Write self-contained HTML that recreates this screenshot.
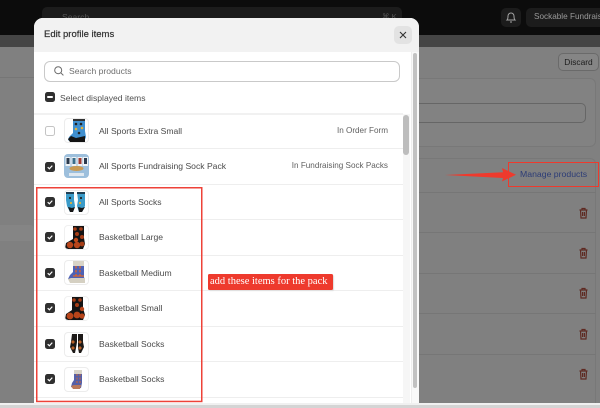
<!DOCTYPE html>
<html><head><meta charset="utf-8">
<style>
html,body{margin:0;padding:0;width:600px;height:408px;overflow:hidden;background:#808080;font-family:"Liberation Sans",sans-serif}
*{box-sizing:border-box}
#w{position:absolute;left:0;top:0;width:600px;height:408px;overflow:hidden;background:#808080;filter:blur(.3px)}
.a{position:absolute}
.row{position:absolute;left:34px;width:369px;height:1px;background:#eeeeee}
.cb{position:absolute;left:45px;width:10px;height:10px;border-radius:2.5px;background:#303030}
.cb svg{position:absolute;left:0;top:0}
.th{position:absolute;left:64px;width:25px;height:25px;border:1px solid #ececec;border-radius:4px;background:#fff;overflow:hidden}
.th svg{position:absolute;left:0;top:0}
.t{position:absolute;left:99px;font-size:8.6px;line-height:12px;color:#4a4a4a;white-space:nowrap}
.r{position:absolute;right:212px;font-size:8.15px;line-height:12px;color:#616161;white-space:nowrap}
.tr{position:absolute;left:578px}
</style></head>
<body>
<div id="w">
<div class="a" style="left:0;top:0;width:600px;height:35px;background:#0c0c0c"></div>
<div class="a" style="left:0;top:35px;width:600px;height:12px;background:#454545"></div>
<div class="a" style="left:42px;top:7px;width:360px;height:20px;border-radius:5px;background:#1c1c1c"></div>
<div class="a" style="left:62px;top:11px;font-size:8.6px;line-height:12px;color:#555">Search</div>
<div class="a" style="left:382px;top:11px;font-size:7.5px;line-height:12px;color:#555">⌘ K</div>
<div class="a" style="left:501px;top:8px;width:20px;height:19px;border-radius:5px;background:#1c1c1c"></div>
<svg class="a" style="left:505px;top:11px" width="12" height="13" viewBox="0 0 12 13" fill="none" stroke="#a6a6a6" stroke-width="1"><path d="M2 9c1-1 1-2 1-4a3 3 0 0 1 6 0c0 2 0 3 1 4z"/><path d="M5 11h2"/></svg>
<div class="a" style="left:526px;top:8px;width:74px;height:19px;border-radius:5px 0 0 5px;background:#1c1c1c"></div>
<div class="a" style="left:534px;top:11px;font-size:8.2px;line-height:12px;color:#9a9a9a;white-space:nowrap">Sockable Fundraisi</div>

<div class="a" style="left:0;top:77px;width:34px;height:1px;background:#767676"></div>
<div class="a" style="left:0;top:225px;width:34px;height:16px;background:#858585;border-radius:0 4px 4px 0"></div>

<div class="a" style="left:558px;top:53px;width:41px;height:18px;border:1px solid #6a6a6a;border-radius:5px;background:#858585;font-size:8.4px;line-height:16px;text-align:center;color:#1c1c1c">Discard</div>
<div class="a" style="left:419px;top:78px;width:177px;height:69px;border-radius:0 6px 6px 0;background:#828282;border:1px solid #787878;border-left:0"></div>
<div class="a" style="left:419px;top:103px;width:167px;height:20px;border:1px solid #666;border-left:0;border-radius:0 5px 5px 0"></div>
<div class="a" style="left:419px;top:158px;width:177px;height:250px;background:#808080;border-right:1px solid #787878;border-top:1px solid #787878;border-radius:0 6px 0 0"></div>
<div class="a" style="left:419px;top:192px;width:177px;height:1px;background:#767676"></div>
<div class="a" style="left:419px;top:232px;width:177px;height:1px;background:#767676"></div>
<div class="a" style="left:419px;top:273px;width:177px;height:1px;background:#767676"></div>
<div class="a" style="left:419px;top:313px;width:177px;height:1px;background:#767676"></div>
<div class="a" style="left:419px;top:354px;width:177px;height:1px;background:#767676"></div>

<div class="a" style="left:520px;top:168px;font-size:8.7px;line-height:12px;color:#2c3c76;white-space:nowrap">Manage products</div>
<div class="a" style="left:508px;top:162px;width:91px;height:25px;border:1.5px solid #ee3a2d"></div>
<svg class="a" style="left:444px;top:165px" width="75" height="20" viewBox="0 0 75 20"><path d="M1 10 L59 7.2 L58 3 L72 9.8 L58 16.5 L59 13 Z" fill="#ee3a2d"/></svg>

<svg class="tr" style="top:207px" width="11" height="12" viewBox="0 0 11 12" fill="none" stroke="#5e2a22" stroke-width="1.2"><path d="M1.5 3h8M4 3V1.5h3V3M2.5 3l.5 8h5l.5-8M4.6 5v4M6.4 5v4"/></svg>
<svg class="tr" style="top:247px" width="11" height="12" viewBox="0 0 11 12" fill="none" stroke="#5e2a22" stroke-width="1.2"><path d="M1.5 3h8M4 3V1.5h3V3M2.5 3l.5 8h5l.5-8M4.6 5v4M6.4 5v4"/></svg>
<svg class="tr" style="top:287px" width="11" height="12" viewBox="0 0 11 12" fill="none" stroke="#5e2a22" stroke-width="1.2"><path d="M1.5 3h8M4 3V1.5h3V3M2.5 3l.5 8h5l.5-8M4.6 5v4M6.4 5v4"/></svg>
<svg class="tr" style="top:328px" width="11" height="12" viewBox="0 0 11 12" fill="none" stroke="#5e2a22" stroke-width="1.2"><path d="M1.5 3h8M4 3V1.5h3V3M2.5 3l.5 8h5l.5-8M4.6 5v4M6.4 5v4"/></svg>
<svg class="tr" style="top:368px" width="11" height="12" viewBox="0 0 11 12" fill="none" stroke="#5e2a22" stroke-width="1.2"><path d="M1.5 3h8M4 3V1.5h3V3M2.5 3l.5 8h5l.5-8M4.6 5v4M6.4 5v4"/></svg>

<!-- modal -->
<div class="a" style="left:34px;top:18px;width:385px;height:390px;background:#fff;border-radius:9px 9px 0 0;overflow:hidden">
  <div class="a" style="left:0;top:0;width:385px;height:34px;background:#f2f2f2"></div>
  <div class="a" style="left:377px;top:34px;width:8px;height:356px;background:#f9f9f9;border-left:1px solid #eee"></div>
  <div class="a" style="left:379px;top:35px;width:4px;height:335px;border-radius:2px;background:#c2c2c2"></div>
  <div class="a" style="left:369px;top:96px;width:7px;height:296px;background:#f6f6f6"></div>
  <div class="a" style="left:369px;top:97px;width:6px;height:40px;border-radius:3px;background:#bdbdbd"></div>
</div>
<div class="a" style="left:44px;top:28px;font-size:9.5px;line-height:13px;font-weight:normal;color:#303030;-webkit-text-stroke:.2px #303030">Edit profile items</div>
<div class="a" style="left:394px;top:26px;width:18px;height:18px;border-radius:5px;background:#e3e3e3"></div>
<svg class="a" style="left:399px;top:31px" width="8" height="8" viewBox="0 0 8 8" stroke="#333" stroke-width="1.1"><path d="M1 1l6 6M7 1l-6 6"/></svg>

<div class="a" style="left:44px;top:61px;width:356px;height:21px;border:1px solid #c9c9c9;border-radius:6px;background:#fff"></div>
<svg class="a" style="left:53px;top:65px" width="12" height="12" viewBox="0 0 12 12" fill="none" stroke="#6b6b6b" stroke-width="1"><circle cx="5.2" cy="5.2" r="3.5"/><path d="M7.8 7.8l2.6 2.6"/></svg>
<div class="a" style="left:69px;top:65px;font-size:8.6px;line-height:12px;color:#6f6f6f">Search products</div>

<div class="cb" style="top:92px"><div class="a" style="left:2px;top:4px;width:6px;height:2px;background:#fff;border-radius:1px"></div></div>
<div class="a" style="left:60px;top:91.5px;font-size:8.6px;line-height:12px;color:#4f4f4f">Select displayed items</div>

<div class="row" style="top:113px;background:#f1f1f1;height:2px"></div>
<div class="row" style="top:148px"></div>
<div class="row" style="top:184px"></div>
<div class="row" style="top:219px"></div>
<div class="row" style="top:255px"></div>
<div class="row" style="top:290px"></div>
<div class="row" style="top:326px"></div>
<div class="row" style="top:361px"></div>
<div class="row" style="top:397px"></div>

<!-- row 1 -->
<div class="a" style="left:45px;top:126px;width:10px;height:10px;border:1px solid #c4c4c4;border-radius:2.5px;background:#fff"></div>
<div class="th" style="top:118px"><svg width="23" height="23" viewBox="0 0 23 23"><path d="M8 0h12v12l1 6-2 5H6l-3-2 1-3 4-4z" fill="#3f8fcf"/><path d="M3 20l3-3 5 2 9-2v6H5z" fill="#141414"/><path d="M8 0h12v2H8z" fill="#333"/><circle cx="11" cy="5" r="1.3" fill="#222"/><circle cx="16" cy="5" r="1.3" fill="#222"/><circle cx="17" cy="9" r="1.3" fill="#e2b33c"/><circle cx="11" cy="10" r="1.3" fill="#e2b33c"/><circle cx="14" cy="14" r="1.3" fill="#222"/></svg></div>
<div class="t" style="top:125px">All Sports Extra Small</div>
<div class="r" style="top:125px">In Order Form</div>

<!-- row 2 -->
<div class="cb" style="top:162px"><svg width="10" height="10"><path d="M2.7 5.2l1.7 1.6 2.9-3.2" fill="none" stroke="#fff" stroke-width="1.2"/></svg></div>
<div class="th" style="top:154px;height:24px;border:0;background:#9dbfdc"><svg width="25" height="24" viewBox="0 0 25 24"><rect x="1.5" y="3" width="5" height="9" fill="#eef2f5"/><rect x="2.5" y="4" width="3" height="6" fill="#2b3a4d"/><rect x="7.5" y="3" width="5" height="9" fill="#eef2f5"/><rect x="8.5" y="4" width="3" height="6" fill="#3a6d8a"/><rect x="13.5" y="3" width="5" height="9" fill="#eef2f5"/><rect x="14.5" y="4" width="3" height="6" fill="#a33c32"/><rect x="19" y="3" width="5" height="9" fill="#eef2f5"/><rect x="20" y="4" width="3" height="6" fill="#2b3a4d"/><ellipse cx="12.5" cy="14.5" rx="7" ry="2.5" fill="#c99a52"/><rect x="5" y="19" width="15" height="3" fill="#dfe8f0"/></svg></div>
<div class="t" style="top:160px">All Sports Fundraising Sock Pack</div>
<div class="r" style="top:160px">In Fundraising Sock Packs</div>

<!-- row 3 -->
<div class="cb" style="top:197px"><svg width="10" height="10"><path d="M2.7 5.2l1.7 1.6 2.9-3.2" fill="none" stroke="#fff" stroke-width="1.2"/></svg></div>
<div class="th" style="top:190px"><svg width="23" height="23" viewBox="0 0 23 23"><path d="M1 1h8v8l1 6-2 6H5L2 15l-1-6z" fill="#3b9bc9"/><path d="M12 1h8v8l0 6-3 6h-3l-2-6 1-6z" fill="#3b9bc9"/><path d="M3 16l2 5h3l2-5-3 1zM13 16l1 5h3l3-5-3 1z" fill="#161616"/><path d="M1 1h8v2H1zM12 1h8v2h-8z" fill="#1f3e52"/><circle cx="5" cy="7" r="1.1" fill="#222"/><circle cx="16" cy="7" r="1.1" fill="#222"/><circle cx="6" cy="12" r="1.1" fill="#e2b33c"/><circle cx="15" cy="12" r="1.1" fill="#e2b33c"/></svg></div>
<div class="t" style="top:195.5px">All Sports Socks</div>

<!-- row 4 -->
<div class="cb" style="top:232px"><svg width="10" height="10"><path d="M2.7 5.2l1.7 1.6 2.9-3.2" fill="none" stroke="#fff" stroke-width="1.2"/></svg></div>
<div class="th" style="top:225px;border-color:#f0f0f0"><svg width="23" height="23" viewBox="0 0 23 23"><path d="M8 0h11v12l1 6-2 5H3L0 22l1-5 7-4z" fill="#141414"/><circle cx="10" cy="3" r="1.8" fill="#a63d16"/><circle cx="16" cy="3" r="1.8" fill="#a63d16"/><circle cx="12" cy="8" r="2" fill="#a63d16"/><circle cx="17" cy="11" r="2" fill="#a63d16"/><circle cx="11" cy="14" r="2.2" fill="#c24a1a"/><circle cx="5" cy="19" r="3.2" fill="#b8451a"/><circle cx="12" cy="19" r="3.2" fill="#b8451a"/><circle cx="17" cy="18" r="2.4" fill="#a63d16"/></svg></div>
<div class="t" style="top:231px">Basketball Large</div>

<!-- row 5 -->
<div class="cb" style="top:268px"><svg width="10" height="10"><path d="M2.7 5.2l1.7 1.6 2.9-3.2" fill="none" stroke="#fff" stroke-width="1.2"/></svg></div>
<div class="th" style="top:260px"><svg width="23" height="23" viewBox="0 0 23 23"><path d="M8 0h11v5H8z" fill="#d8d4c8"/><path d="M8 5h11v11l1 4H6L3 18l2-4 3-3z" fill="#4e62b5"/><path d="M3 18l3-1 14 0 0 5H5z" fill="#d5d0c2"/><path d="M11 5v11M15 5v12" stroke="#d9662e" stroke-width="1.4" stroke-dasharray="2.5 1.5"/><path d="M8 15h11" stroke="#d9662e" stroke-width="1.2"/></svg></div>
<div class="t" style="top:266.5px">Basketball Medium</div>

<!-- row 6 -->
<div class="cb" style="top:303px"><svg width="10" height="10"><path d="M2.7 5.2l1.7 1.6 2.9-3.2" fill="none" stroke="#fff" stroke-width="1.2"/></svg></div>
<div class="th" style="top:296px;border-color:#f0f0f0"><svg width="23" height="23" viewBox="0 0 23 23"><path d="M7 0h11v11l2 7-2 5H3L0 22l1-5 6-4z" fill="#141414"/><circle cx="9" cy="3" r="1.8" fill="#a63d16"/><circle cx="15" cy="3" r="1.8" fill="#a63d16"/><circle cx="12" cy="8" r="2" fill="#a63d16"/><circle cx="17" cy="12" r="2.2" fill="#b8451a"/><circle cx="5" cy="19" r="3.4" fill="#b8451a"/><circle cx="12" cy="18" r="3.4" fill="#b8451a"/><circle cx="17" cy="19" r="2.6" fill="#b8451a"/></svg></div>
<div class="t" style="top:302px">Basketball Small</div>

<!-- row 7 -->
<div class="cb" style="top:339px"><svg width="10" height="10"><path d="M2.7 5.2l1.7 1.6 2.9-3.2" fill="none" stroke="#fff" stroke-width="1.2"/></svg></div>
<div class="th" style="top:332px"><svg width="23" height="23" viewBox="0 0 23 23"><path d="M7 1h5v8l-1 6-1 5H8L5 14l1-5z" fill="#1d1a18"/><path d="M13 1h5v8l1 5-3 6h-2l-1-5z" fill="#1d1a18"/><path d="M8 7l2 2-2 2-2-2zM15 7l2 2-2 2-2-2zM8 13l2 2-2 2-2-2zM15 13l2 2-2 2-2-2z" fill="#b8612a"/></svg></div>
<div class="t" style="top:337.5px">Basketball Socks</div>

<!-- row 8 -->
<div class="cb" style="top:374px"><svg width="10" height="10"><path d="M2.7 5.2l1.7 1.6 2.9-3.2" fill="none" stroke="#fff" stroke-width="1.2"/></svg></div>
<div class="th" style="top:367px"><svg width="23" height="23" viewBox="0 0 23 23"><path d="M9 2h8v4H9z" fill="#d8d4c8"/><path d="M9 6h8v9l-1 5H9L6 19l1-4 2-3z" fill="#5560a8"/><path d="M6 18l3-1 7 0-1 4H8z" fill="#b9785a"/><path d="M12 6v10M15 6v10" stroke="#c8683a" stroke-width="1.1" stroke-dasharray="2 1.5"/></svg></div>
<div class="t" style="top:373px">Basketball Socks</div>

<!-- annotations -->
<svg class="a" style="left:0;top:0" width="600" height="408"><rect x="36.75" y="187.75" width="165" height="213.7" fill="none" stroke="#ee4238" stroke-width="1.5"/></svg>
<div class="a" style="left:208px;top:274px;width:125px;height:15.5px;background:#ee3a2d;border-radius:1.5px;box-shadow:1px 1px 1px #ddd;color:#fff;font-family:'Liberation Serif',serif;font-size:10.5px;line-height:15px;padding-left:2px;white-space:nowrap">add these items for the pack</div>

<div class="a" style="left:0;top:403px;width:600px;height:5px;background:#d4d4d4;border-top:2px solid #f0f0f0"></div>
</div>
</body></html>
